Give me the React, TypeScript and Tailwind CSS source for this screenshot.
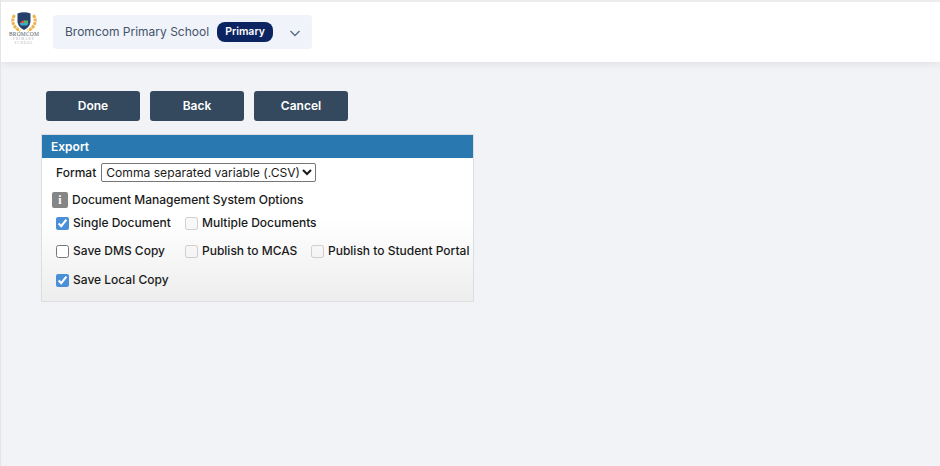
const font = { fontFamily: 'Inter, "Liberation Sans", sans-serif' };

function Logo() {
  return (
    <div className="mb-[7px] flex w-[32px] flex-col items-center">
      <svg width="26" height="20" viewBox="0 0 26 20">
        {/* laurel */}
        <path d="M3.5 3 C0 9 2 15 9 19" fill="none" stroke="#eab54e" strokeWidth="3" strokeDasharray="3 0.7" />
        <path d="M22.5 3 C26 9 24 15 17 19" fill="none" stroke="#eab54e" strokeWidth="3" strokeDasharray="3 0.7" />
        {/* shield */}
        <path d="M6.5 1.5 Q13 -0.8 19.5 1.5 L19.5 10 Q18.5 15.5 13 18 Q7.5 15.5 6.5 10 Z" fill="#24406b" />
        <path d="M9 11 Q13 5.5 17 11 Z" fill="#e0503c" />
        <path d="M8.5 11 L17.5 11 L16 13.5 L10 13.5 Z" fill="#3fa9c9" />
        <path d="M13 8.5 L17 8.5 L17 11 L13 11 Z" fill="#58b368" />
      </svg>
      <span className="text-[5.5px] leading-[5px] tracking-[0.2px] text-[#555b66]" style={{ fontFamily: '"Liberation Serif", serif' }}>
        BROMCOM
      </span>
      <span className="text-[3px] leading-[4px] tracking-[1.2px] text-[#a5a9b1]" style={{ fontFamily: '"Liberation Serif", serif' }}>
        PRIMARY
      </span>
      <span className="text-[3px] leading-[4px] tracking-[1.2px] text-[#a5a9b1]" style={{ fontFamily: '"Liberation Serif", serif' }}>
        SCHOOL
      </span>
    </div>
  );
}

function ActionButton({ label }: { label: string }) {
  return (
    <button className="h-[30px] w-[94px] rounded-[3px] bg-[#34495e] text-[12px] font-semibold text-white">
      {label}
    </button>
  );
}

function Check({
  label,
  checked = false,
  disabled = false,
  className = '',
}: {
  label: string;
  checked?: boolean;
  disabled?: boolean;
  className?: string;
}) {
  return (
    <label className={`flex items-center gap-[4px] whitespace-nowrap text-[12px] leading-[16px] font-medium text-[#1a1a1a] ${className}`}>
      <input
        type="checkbox"
        defaultChecked={checked}
        disabled={disabled}
        className="m-0 h-[13px] w-[13px] accent-[#4a90d9]"
      />
      {label}
    </label>
  );
}

export default function App() {
  return (
    <div className="h-[466px] w-[940px] overflow-hidden border-l border-[#e3e5ea] bg-[#f1f3f7]" style={font}>
      {/* top bar */}
      <div className="flex h-[62px] items-center border-t-2 border-[#ececec] bg-white pl-[7px] shadow-[0_2px_8px_rgba(0,0,0,0.08)]">
        <Logo />
        <div className="ml-[13px] flex h-[34px] w-[259px] items-center rounded-[4px] bg-[#f0f3f9] pl-[12px]">
          <span className="whitespace-nowrap text-[12px] text-[#44546a]">Bromcom Primary School</span>
          <span className="ml-[8px] flex h-[20px] items-center rounded-[8px] bg-[#0c2461] px-[8px] text-[10.5px] font-semibold text-white">
            Primary
          </span>
          <svg className="ml-[16px] mt-[2px]" width="12" height="12" viewBox="0 0 12 12" fill="none">
            <path d="M1.5 4 L6 8.5 L10.5 4" stroke="#5a6b82" strokeWidth="1.3" />
          </svg>
        </div>
      </div>

      <div className="pl-[40px]">
        <div className="mt-[29px] flex gap-[10px] pl-[5px]">
          <ActionButton label="Done" />
          <ActionButton label="Back" />
          <ActionButton label="Cancel" />
        </div>

        {/* export panel */}
        <div className="mt-[13px] h-[168px] w-[433px] border border-[#dcdee2] bg-[linear-gradient(to_bottom,#ffffff_0%,#ffffff_50%,#ededed_100%)]">
          <div className="flex h-[23px] items-center bg-[#2a78b0] pl-[9px] pt-px text-[12px] font-semibold text-white">
            Export
          </div>

          <div className="mt-[5px] flex items-center gap-[5px] pl-[14px] text-[12px] font-medium text-[#1a1a1a]">
            <span>Format</span>
            <select className="h-[19px] w-[215px] appearance-auto rounded-[2px] border border-[#767676] bg-white text-[12.1px] font-normal text-[#1a1a1a]">
              <option>Comma separated variable (.CSV)</option>
            </select>
          </div>

          <div className="mt-[9px] flex items-center gap-[4px] pl-[10px] text-[12px] font-medium text-[#1a1a1a]">
            <span className="flex h-[16px] w-[16px] items-center justify-center rounded-[2px] bg-[#858585] text-[12px] leading-none font-bold text-white" style={{ fontFamily: '"Liberation Serif", serif' }}>
              i
            </span>
            Document Management System Options
          </div>

          <div className="mt-[6px] flex h-[16px] pl-[14px]">
            <Check label="Single Document" checked className="w-[129px]" />
            <Check label="Multiple Documents" disabled />
          </div>

          <div className="mt-[12px] flex h-[16px] pl-[14px]">
            <Check label="Save DMS Copy" className="w-[129px]" />
            <Check label="Publish to MCAS" disabled className="w-[126px]" />
            <Check label="Publish to Student Portal" disabled />
          </div>

          <div className="mt-[13px] flex h-[16px] pl-[14px]">
            <Check label="Save Local Copy" checked />
          </div>
        </div>
      </div>
    </div>
  );
}
